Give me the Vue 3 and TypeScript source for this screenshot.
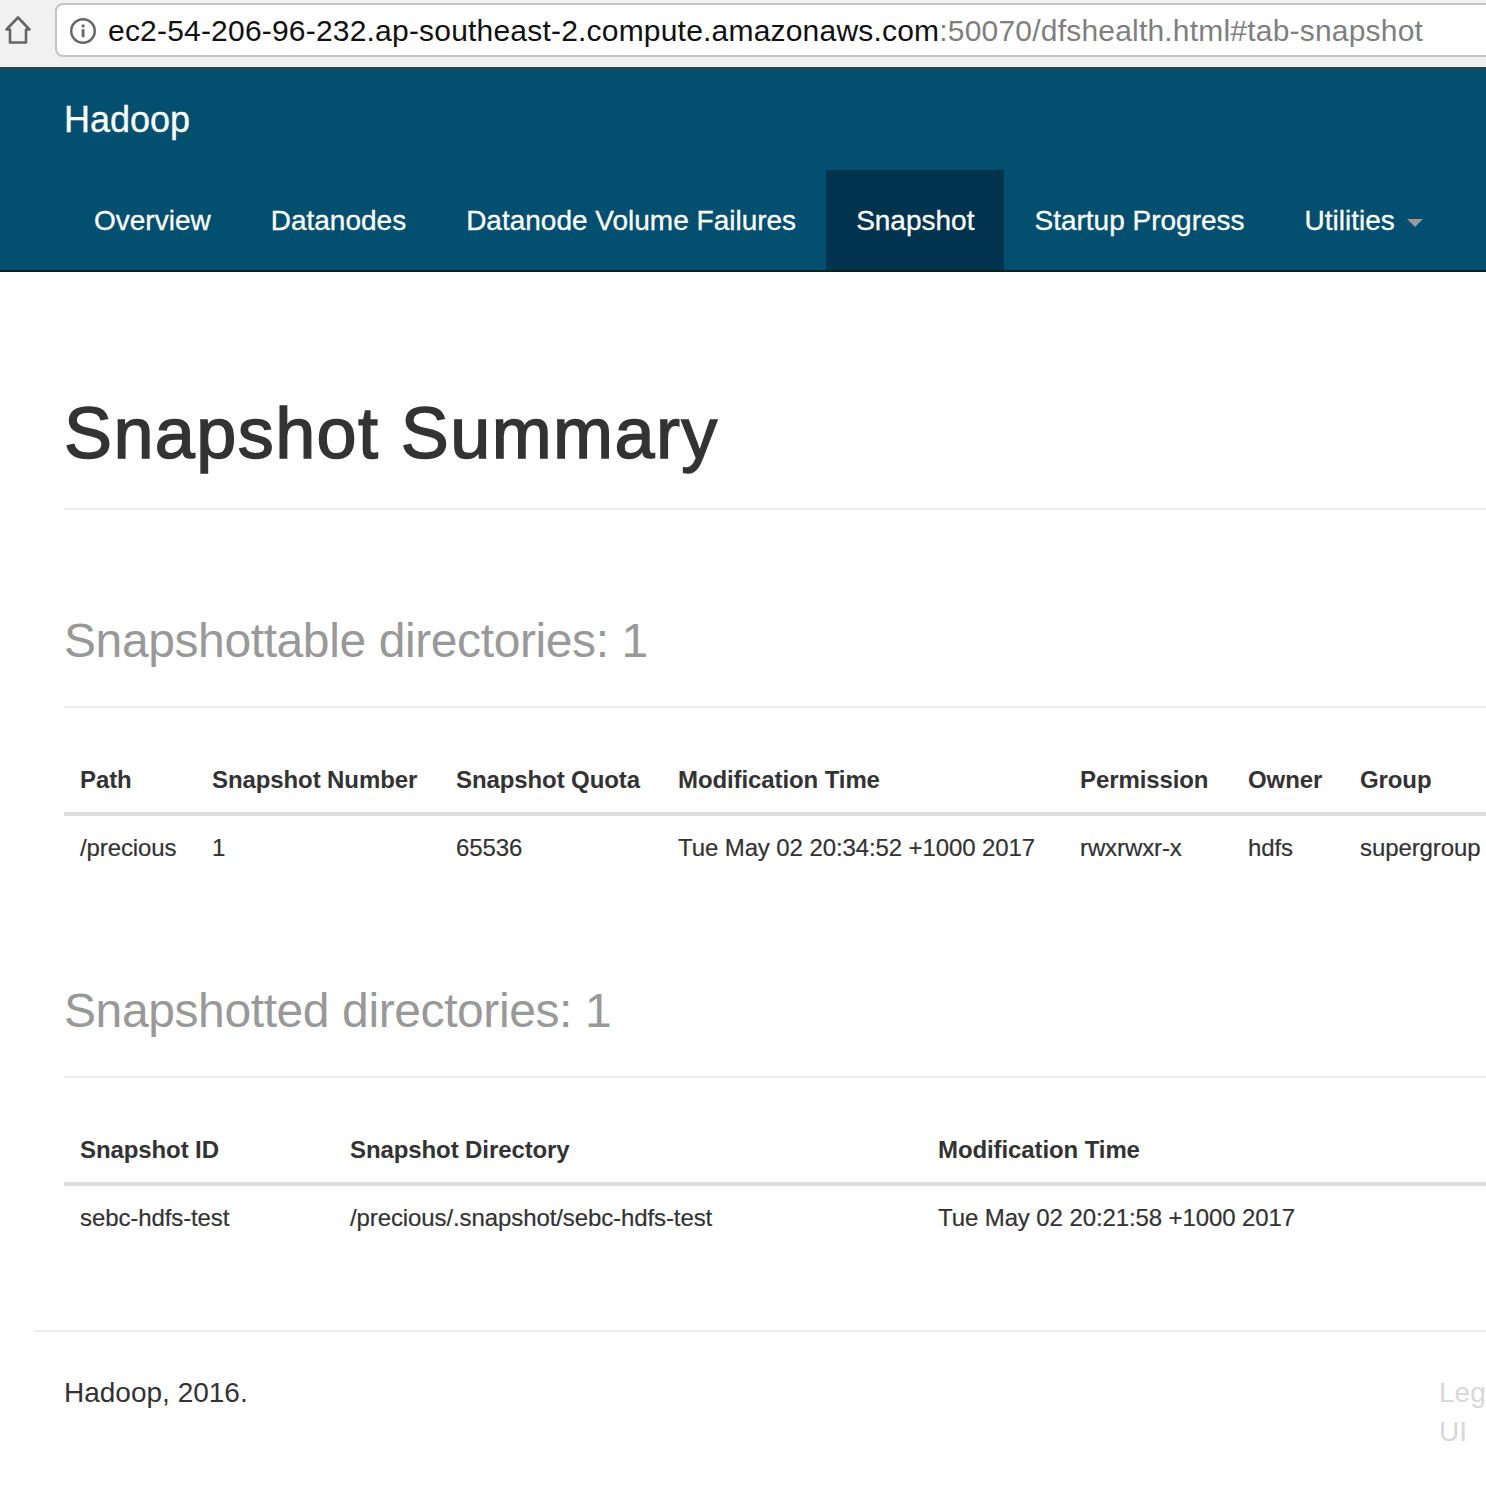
<script setup lang="ts">
const navItems = [
  { label: 'Overview', active: false },
  { label: 'Datanodes', active: false },
  { label: 'Datanode Volume Failures', active: false },
  { label: 'Snapshot', active: true },
  { label: 'Startup Progress', active: false },
]
</script>

<template>
  <div class="page">
    <div class="chrome">
      <svg class="home" width="36" height="30" viewBox="0 0 36 30">
        <path d="M18 2.500 6.500 14.500H10V27.500H26V14.500H29.500Z" fill="none" stroke="#666" stroke-width="2.600" stroke-linejoin="round"/>
      </svg>
      <div class="urlbar">
        <svg class="info" width="28" height="28" viewBox="0 0 28 28">
          <circle cx="14" cy="14" r="11.800" fill="none" stroke="#666" stroke-width="2.400"/>
          <rect x="12.700" y="12.200" width="2.800" height="8" fill="#666"/>
          <rect x="12.700" y="7.600" width="2.800" height="2.800" fill="#666"/>
        </svg>
        <span class="host">ec2-54-206-96-232.ap-southeast-2.compute.amazonaws.com</span><span class="path">:50070/dfshealth.html#tab-snapshot</span>
      </div>
    </div>

    <nav class="navbar">
      <div class="brand">Hadoop</div>
      <ul class="nav">
        <li v-for="item in navItems" :key="item.label" :class="{ active: item.active }">{{ item.label }}</li>
        <li>Utilities<span class="caret"></span></li>
      </ul>
    </nav>

    <main class="content">
      <h1 class="title">Snapshot Summary</h1>

      <h2 class="sub first">Snapshottable directories: 1</h2>
      <table class="tbl">
        <colgroup>
          <col class="c132" /><col class="c244" /><col class="c222" /><col class="c402" /><col class="c168" /><col class="c112" /><col />
        </colgroup>
        <thead>
          <tr><th>Path</th><th>Snapshot Number</th><th>Snapshot Quota</th><th>Modification Time</th><th>Permission</th><th>Owner</th><th>Group</th></tr>
        </thead>
        <tbody>
          <tr><td>/precious</td><td>1</td><td>65536</td><td>Tue May 02 20:34:52 +1000 2017</td><td>rwxrwxr-x</td><td>hdfs</td><td>supergroup</td></tr>
        </tbody>
      </table>

      <h2 class="sub second">Snapshotted directories: 1</h2>
      <table class="tbl">
        <colgroup>
          <col class="c270" /><col class="c588" /><col />
        </colgroup>
        <thead>
          <tr><th>Snapshot ID</th><th>Snapshot Directory</th><th>Modification Time</th></tr>
        </thead>
        <tbody>
          <tr><td>sebc-hdfs-test</td><td>/precious/.snapshot/sebc-hdfs-test</td><td>Tue May 02 20:21:58 +1000 2017</td></tr>
        </tbody>
      </table>
    </main>

    <footer class="footer">
      <div class="copy">Hadoop, 2016.</div>
      <div class="legacy">Legacy<br />UI</div>
    </footer>
  </div>
</template>

<style>
html, body { margin: 0; padding: 0; background: #fff; overflow: hidden; }
</style>

<style scoped>
.page {
  width: 1486px;
  height: 1488px;
  overflow: hidden;
  font-family: "Liberation Sans", Arial, sans-serif;
  color: #333;
  font-size: 24px;
}
.chrome {
  height: 69px;
  box-sizing: border-box;
  background: #f1f1f1;
  border-bottom: 2px solid #3d3d3d;
  display: flex;
  align-items: flex-start;
  padding: 3px 0 0 0;
}
.home { flex: none; margin-top: 12px; }
.urlbar {
  flex: none;
  width: 1500px;
  height: 54px;
  margin-left: 19px;
  box-sizing: border-box;
  background: #fff;
  border: 2px solid #c4c4c4;
  border-radius: 8px;
  display: flex;
  align-items: center;
  padding: 1px 0 0 12px;
  font-size: 30px;
  white-space: nowrap;
  letter-spacing: 0.2px;
}
.info { flex: none; margin-right: 11px; }
.host { color: #111; }
.path { color: #7f7f7f; }
.navbar {
  background: #024f70;
  border-bottom: 2px solid #022;
  height: 203px;
  box-sizing: border-box;
  display: flex;
  flex-direction: column;
  padding-left: 64px;
}
.brand {
  color: #fff;
  font-size: 36px;
  height: 101px;
  line-height: 102px;
  -webkit-text-stroke: 0.3px #fff;
}
.nav {
  list-style: none;
  margin: 0;
  padding: 0;
  display: flex;
  height: 100px;
}
.nav li {
  color: #fff;
  font-size: 28px;
  line-height: 102px;
  height: 100px;
  padding: 0 30px;
  white-space: nowrap;
  -webkit-text-stroke: 0.3px #fff;
}
.nav li.active { background: #00334e; }
.caret {
  display: inline-block;
  width: 0;
  height: 0;
  margin-left: 12px;
  vertical-align: middle;
  border-top: 8px solid #9a9a9a;
  border-left: 8px solid transparent;
  border-right: 8px solid transparent;
}
.content { padding-left: 64px; width: 1600px; box-sizing: border-box; }
.title {
  margin: 0;
  padding: 117px 0 31px;
  font-size: 72px;
  line-height: 88px;
  font-weight: 400;
  letter-spacing: 1.4px;
  -webkit-text-stroke: 1.5px #333;
  color: #333;
  border-bottom: 2px solid #eee;
}
.sub {
  margin: 0;
  font-size: 48px;
  line-height: 56px;
  font-weight: 400;
  letter-spacing: -0.4px;
  color: #999;
  padding-bottom: 37px;
  border-bottom: 2px solid #eee;
}
.first { padding-top: 103px; }
.second { padding-top: 0; margin-top: 103px; }
.tbl {
  border-collapse: collapse;
  table-layout: fixed;
  width: 100%;
}
.c132 { width: 132px; }
.c244 { width: 244px; }
.c222 { width: 222px; }
.c402 { width: 402px; }
.c168 { width: 168px; }
.c112 { width: 112px; }
.c270 { width: 270px; }
.c588 { width: 588px; }
.tbl th, .tbl td {
  text-align: left;
  padding: 16px;
  white-space: nowrap;
  line-height: 40px;
  font-size: 24px;
  letter-spacing: -0.1px;
}
.tbl th { font-weight: 700; padding: 52px 16px 12px; box-sizing: border-box; }
.tbl thead tr { border-bottom: 4px solid #ddd; }
.tbl td { height: 64px; padding-top: 12px; padding-bottom: 12px; box-sizing: border-box; -webkit-text-stroke: 0.2px #333; }
.footer {
  margin: 80px 0 0 34px;
  width: 1600px;
  box-sizing: border-box;
  border-top: 2px solid #eee;
  padding: 41px 0 0 30px;
  display: flex;
  font-size: 28px;
  line-height: 39px;
}
.copy { width: 1375px; }
.legacy { color: #d8d8d8; }
</style>
